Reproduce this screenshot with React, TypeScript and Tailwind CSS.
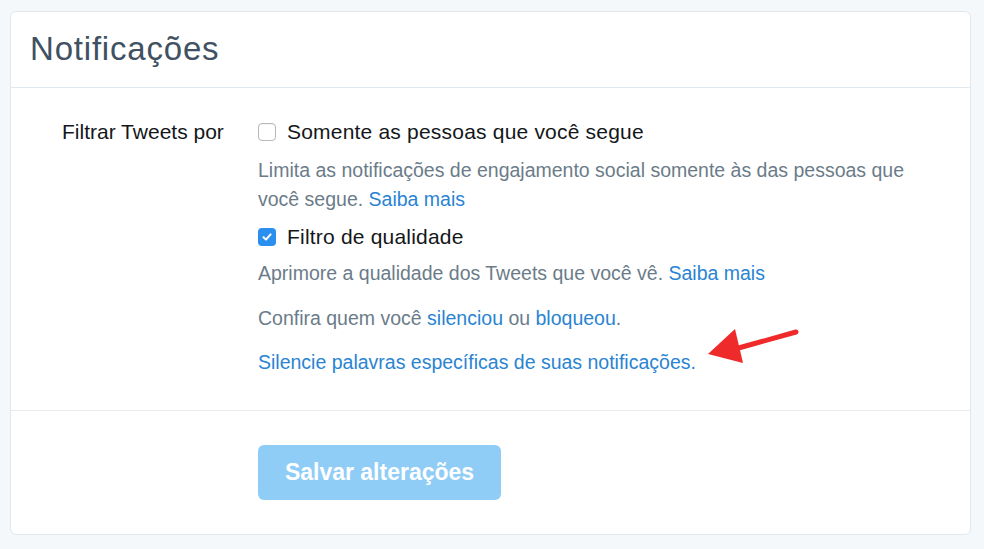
import React from "react";

const font = { fontFamily: '"Liberation Sans", Arial, sans-serif' };

export default function App() {
  return (
    <div className="w-[984px] h-[549px] bg-[#f5f8fa] pt-[11px] pl-[10px] relative overflow-hidden" style={font}>
      <div className="w-[961px] h-[524px] bg-white border border-[#e1e8ed] rounded-[6px] flex flex-col">
        <div className="h-[76px] border-b border-[#e1e8ed] pl-[19px] flex items-center">
          <h1 className="text-[33px] tracking-[0.8px] text-[#3f5163] leading-none pb-[2px]">Notificações</h1>
        </div>
        <div className="flex pl-[51px] pt-[30px] h-[323px] border-b border-[#e6ecf0]">
          <div className="w-[196px] text-[21px] leading-[28px] text-[#14171a]">Filtrar Tweets por</div>
          <div className="flex-1">
            <div className="flex items-center h-[28px] text-[21px] tracking-[0.2px] text-[#14171a]">
              <span className="w-[18px] h-[18px] rounded-[4px] border border-[#b8b8b8] bg-white mr-[11px] shadow-[inset_0_1px_1px_rgba(0,0,0,0.05)]" />
              Somente as pessoas que você segue
            </div>
            <div className="mt-[9.5px] text-[19.5px] leading-[29px] text-[#6b7c89]">
              <div>Limita as notificações de engajamento social somente às das pessoas que</div>
              <div>
                você segue. <span className="text-[#2a84d2]">Saiba mais</span>
              </div>
            </div>
            <div className="mt-[9.5px] flex items-center h-[28px] text-[21px] tracking-[0.2px] text-[#14171a]">
              <span className="w-[18px] h-[18px] rounded-[4px] bg-[#2b8ff0] mr-[11px] flex items-center justify-center">
                <svg width="12" height="12" viewBox="0 0 12 12">
                  <path d="M2.5 6.2 L5 8.6 L9.6 3.4" stroke="white" strokeWidth="2" fill="none" strokeLinecap="round" strokeLinejoin="round" />
                </svg>
              </span>
              Filtro de qualidade
            </div>
            <div className="mt-[7.5px] text-[19.5px] leading-[29px] text-[#6b7c89]">
              Aprimore a qualidade dos Tweets que você vê. <span className="text-[#2a84d2]">Saiba mais</span>
            </div>
            <div className="mt-[16px] text-[19.5px] leading-[29px] text-[#6b7c89]">
              Confira quem você <span className="text-[#2a84d2]">silenciou</span> ou <span className="text-[#2a84d2]">bloqueou</span>.
            </div>
            <div className="mt-[15px] text-[19.5px] leading-[29px] text-[#2a84d2]">
              Silencie palavras específicas de suas notificações.
            </div>
          </div>
        </div>
        <div className="pl-[247px] pt-[34px]">
          <button className="w-[243px] h-[55px] rounded-[6px] bg-[#8fcdf7] text-white font-bold text-[23px]">
            Salvar alterações
          </button>
        </div>
      </div>
      <svg className="absolute left-0 top-0" width="984" height="549" viewBox="0 0 984 549">
        <line x1="796" y1="332" x2="735" y2="349" stroke="#ee2a2a" strokeWidth="5" strokeLinecap="round" />
        <polygon points="708,354 735,329 743,363" fill="#ee2a2a" />
      </svg>
    </div>
  );
}
